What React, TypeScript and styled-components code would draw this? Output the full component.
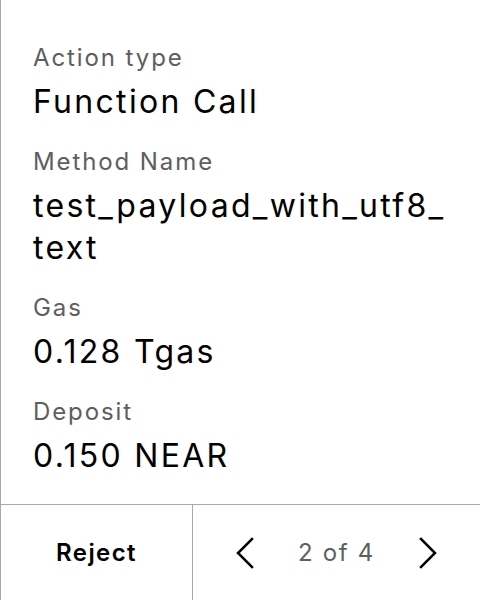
import React from "react";
import styled, { createGlobalStyle } from "styled-components";

const GlobalStyle = createGlobalStyle`
  html, body {
    margin: 0;
    padding: 0;
    background: #ffffff;
  }
  body {
    font-family: Inter, "Noto Sans", sans-serif;
    color: #000000;
  }
`;

const Screen = styled.div`
  box-sizing: border-box;
  width: 480px;
  height: 600px;
  display: flex;
  flex-direction: column;
  border-left: 1px solid #a8a8a8;
`;

const Details = styled.div`
  flex: 1;
  display: flex;
  flex-direction: column;
  gap: 23px;
  padding: 42px 32px 0 32px;
`;

const Field = styled.div`
  display: flex;
  flex-direction: column;
  gap: 7px;
`;

const Label = styled.div`
  font-size: 24px;
  line-height: 32px;
  letter-spacing: 1.9px;
  color: #5e5e5e;
`;

const Value = styled.div`
  font-size: 32px;
  line-height: 42px;
  letter-spacing: 2.3px;
  color: #000000;
  overflow-wrap: anywhere;
`;

const Footer = styled.div`
  box-sizing: border-box;
  height: 96px;
  display: grid;
  grid-template-columns: 192px 1fr;
  border-top: 1px solid #a8a8a8;
`;

const RejectButton = styled.button`
  border: none;
  border-right: 1px solid #a8a8a8;
  background: none;
  padding: 0;
  font-family: Inter, "Noto Sans", sans-serif;
  font-size: 24px;
  font-weight: 600;
  letter-spacing: 1.4px;
  color: #000000;
`;

const Pager = styled.div`
  display: flex;
  align-items: center;
  justify-content: center;
  gap: 44px;
`;

const PageText = styled.span`
  font-size: 24px;
  letter-spacing: 1.7px;
  color: #5e5e5e;
`;

const Arrow = styled.button`
  border: none;
  background: none;
  padding: 0;
  display: flex;
  align-items: center;
`;

const Chevron = ({ dir }: { dir: "left" | "right" }) => (
  <svg width="18" height="32" viewBox="0 0 18 32" fill="none">
    <polyline
      points={dir === "left" ? "16,2 2,16 16,30" : "2,2 16,16 2,30"}
      stroke="#000"
      strokeWidth="2.5"
      strokeLinecap="square"
    />
  </svg>
);

const fields = [
  { label: "Action type", value: "Function Call" },
  { label: "Method Name", value: "test_payload_with_utf8_text" },
  { label: "Gas", value: "0.128 Tgas" },
  { label: "Deposit", value: "0.150 NEAR" },
];

const App = () => {
  return (
    <>
      <GlobalStyle />
      <Screen>
        <Details>
          {fields.map((f) => (
            <Field key={f.label}>
              <Label>{f.label}</Label>
              <Value>{f.value}</Value>
            </Field>
          ))}
        </Details>
        <Footer>
          <RejectButton>Reject</RejectButton>
          <Pager>
            <Arrow>
              <Chevron dir="left" />
            </Arrow>
            <PageText>2 of 4</PageText>
            <Arrow>
              <Chevron dir="right" />
            </Arrow>
          </Pager>
        </Footer>
      </Screen>
    </>
  );
};

export default App;
